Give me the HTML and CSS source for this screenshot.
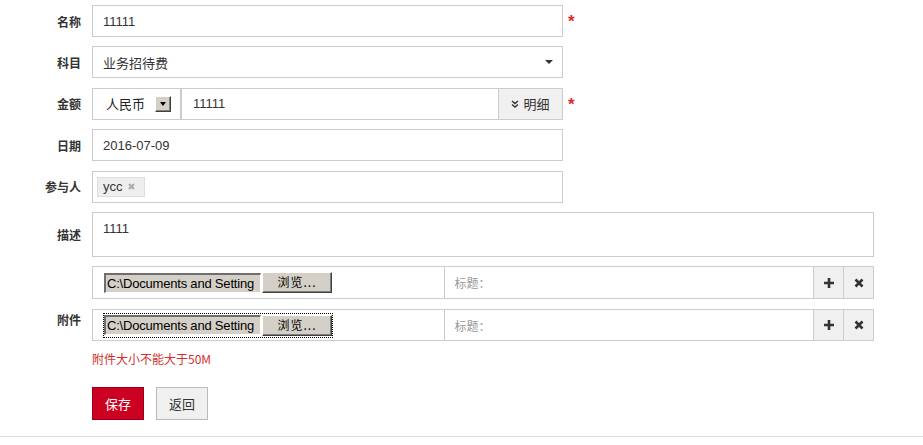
FILE: index.html
```html
<!DOCTYPE html>
<html>
<head>
<meta charset="utf-8">
<link rel="stylesheet" href="styles.css">
</head>
<body>
<div class="form">
  <div class="row">
    <div class="label">名称</div>
    <div class="box w470 txt">11111</div>
    <span class="req">*</span>
  </div>
  <div class="row">
    <div class="label">科目</div>
    <div class="box w470 txt cjk select">业务招待费<span class="caret"></span></div>
  </div>
  <div class="row">
    <div class="label">金额</div>
    <div class="group">
      <div class="cur"><span class="cur-text">人民币</span><span class="win-btn"><span class="win-tri"></span></span></div>
      <div class="amt txt">11111</div>
      <div class="detail"><svg class="dchev" width="8" height="8" viewBox="0 0 8 8"><path d="M1 1 L4 3.5 L7 1 M1 4.5 L4 7 L7 4.5" fill="none" stroke="#333" stroke-width="1.4"/></svg>明细</div>
    </div>
    <span class="req">*</span>
  </div>
  <div class="row">
    <div class="label">日期</div>
    <div class="box w470 txt">2016-07-09</div>
  </div>
  <div class="row">
    <div class="label">参与人</div>
    <div class="box w470 tags"><span class="tag">ycc <svg width="7" height="7" viewBox="0 0 7 7"><path d="M1 1 L6 6 M6 1 L1 6" stroke="#aaa" stroke-width="2"/></svg></span></div>
  </div>
  <div class="row">
    <div class="label">描述</div>
    <div class="box w782 area txt">1111</div>
  </div>
  <div class="row attach-row">
    <div class="label attach-label">附件</div>
    <div class="attach-group">
      <div class="file-row">
        <div class="file-cell"><div class="file-wrap"><span class="file-field">C:\Documents and Setting</span><span class="file-btn">浏览...</span></div></div>
        <div class="title-cell">标题：</div>
        <div class="icon-btn"><svg width="12" height="12" viewBox="0 0 12 12"><path d="M6 1 V11 M1 6 H11" stroke="#333" stroke-width="2.6"/></svg></div>
        <div class="icon-btn"><svg width="10" height="10" viewBox="0 0 10 10"><path d="M1.5 1.5 L8.5 8.5 M8.5 1.5 L1.5 8.5" stroke="#333" stroke-width="2.6"/></svg></div>
      </div>
      <div class="file-row second">
        <div class="file-cell"><div class="file-wrap focus"><span class="file-field">C:\Documents and Setting</span><span class="file-btn">浏览...</span></div></div>
        <div class="title-cell">标题：</div>
        <div class="icon-btn"><svg width="12" height="12" viewBox="0 0 12 12"><path d="M6 1 V11 M1 6 H11" stroke="#333" stroke-width="2.6"/></svg></div>
        <div class="icon-btn"><svg width="10" height="10" viewBox="0 0 10 10"><path d="M1.5 1.5 L8.5 8.5 M8.5 1.5 L1.5 8.5" stroke="#333" stroke-width="2.6"/></svg></div>
      </div>
      <div class="err">附件大小不能大于50M</div>
    </div>
  </div>
  <div class="actions">
    <span class="btn save">保存</span>
    <span class="btn back">返回</span>
  </div>
</div>
<div class="bottom-line"></div>
</body>
</html>
```

FILE: styles.css
```css
html, body {
  margin: 0;
  padding: 0;
  background: #fff;
}
body {
  font-family: "Liberation Sans", "Noto Sans CJK SC", sans-serif;
  font-size: 12px;
  color: #333;
}
.form {
  padding-top: 5px;
}
.row {
  display: flex;
  align-items: center;
  margin-bottom: 9.4px;
}
.label {
  width: 81px;
  padding-right: 11px;
  text-align: right;
  font-weight: bold;
  font-size: 12px;
  font-family: "Noto Sans CJK SC", sans-serif;
  color: #333;
  flex: none;
}
.box {
  box-sizing: border-box;
  height: 32px;
  border: 1px solid #ccc;
  background: #fff;
  display: flex;
  align-items: center;
  padding-left: 10px;
  position: relative;
}
.w470 { width: 471px; }
.w782 { width: 782px; }
.txt { font-size: 13px; color: #333; }
.cjk { font-family: "Noto Sans CJK SC", sans-serif; font-size: 13px; }
.req {
  color: #e02828;
  font-size: 17px;
  font-weight: bold;
  margin-left: 5px;
  margin-top: 2px;
  font-family: "Liberation Sans", sans-serif;
}
.caret {
  position: absolute;
  right: 9px;
  top: 13px;
  width: 0;
  height: 0;
  border-left: 4px solid transparent;
  border-right: 4px solid transparent;
  border-top: 4px solid #333;
}
.group {
  display: flex;
  height: 32px;
  width: 471px;
  box-sizing: border-box;
}
.cur {
  box-sizing: border-box;
  width: 90px;
  border: 1px solid #ccc;
  border-right: 2px solid #ccc;
  display: flex;
  align-items: center;
  padding-left: 13px;
  font-family: "Noto Sans CJK SC", sans-serif;
  font-size: 13px;
  color: #222;
}
.cur-text { width: 49px; }
.win-btn {
  box-sizing: border-box;
  width: 16px;
  height: 16px;
  background: #d4d0c8;
  border-top: 1px solid #fff;
  border-left: 1px solid #fff;
  border-right: 1px solid #404040;
  border-bottom: 1px solid #404040;
  box-shadow: inset -1px -1px 0 #808080;
  display: flex;
  align-items: center;
  justify-content: center;
}
.win-tri {
  width: 0;
  height: 0;
  border-left: 3.5px solid transparent;
  border-right: 3.5px solid transparent;
  border-top: 4px solid #000;
}
.amt {
  box-sizing: border-box;
  flex: 1;
  border-top: 1px solid #ccc;
  border-bottom: 1px solid #ccc;
  display: flex;
  align-items: center;
  padding-left: 11px;
}
.detail {
  box-sizing: border-box;
  width: 65px;
  background: #f0f0f0;
  border: 1px solid #ccc;
  display: flex;
  align-items: center;
  justify-content: center;
  font-family: "Noto Sans CJK SC", sans-serif;
  font-size: 13px;
  color: #333;
}
.dchev { margin-right: 4px; margin-top: 1px; }
.tags { padding-left: 4px; }
.tag {
  box-sizing: border-box;
  height: 20px;
  width: 48px;
  background: #eee;
  border: 1px solid #ddd;
  display: flex;
  align-items: center;
  padding-left: 5px;
  font-size: 13px;
  color: #333;
  gap: 5px;
}
.area {
  height: 45px;
  align-items: flex-start;
  padding-top: 8px;
}
.attach-row {
  align-items: flex-start;
  margin-top: 1.6px;
}
.attach-label {
  padding-top: 46px;
  line-height: 16px;
}
.attach-group {
  display: flex;
  flex-direction: column;
}
.file-row {
  box-sizing: border-box;
  width: 782px;
  height: 33px;
  display: flex;
  border: 1px solid #ccc;
}
.file-row.second {
  margin-top: 10px;
  height: 32px;
}
.file-cell {
  box-sizing: border-box;
  width: 352px;
  border-right: 1px solid #ccc;
  display: flex;
  align-items: center;
  padding-left: 10px;
}
.file-wrap {
  display: flex;
  align-items: center;
  border: 1px dotted transparent;
  padding: 1px 0 1px 0;
}
.file-wrap.focus {
  border: 1px dotted #000;
}
.file-field {
  box-sizing: border-box;
  width: 157px;
  height: 20px;
  overflow: hidden;
  white-space: nowrap;
  background: #d4d0c8;
  border-top: 2px solid #6e6e6e;
  border-left: 2px solid #6e6e6e;
  border-right: 1px solid #fff;
  border-bottom: 1px solid #fff;
  font-size: 13px;
  letter-spacing: -0.2px;
  line-height: 17px;
  color: #000;
  padding-left: 1px;
}
.file-btn {
  box-sizing: border-box;
  width: 70px;
  height: 21px;
  background: #d4d0c8;
  border-top: 1px solid #fff;
  border-left: 1px solid #fff;
  border-right: 1px solid #404040;
  border-bottom: 1px solid #404040;
  box-shadow: inset -1px -1px 0 #808080;
  font-family: "Noto Sans CJK SC", sans-serif;
  font-size: 12px;
  line-height: 18px;
  text-align: center;
  color: #000;
  letter-spacing: 1px;
  margin-left: 1px;
}
.title-cell {
  box-sizing: border-box;
  width: 369px;
  display: flex;
  align-items: center;
  padding-left: 10px;
  font-family: "Noto Sans CJK SC", sans-serif;
  font-size: 12px;
  color: #999;
}
.icon-btn {
  box-sizing: border-box;
  width: 30px;
  background: #f0f0f0;
  border-left: 1px solid #ccc;
  display: flex;
  align-items: center;
  justify-content: center;
}
.err {
  margin-top: 10px;
  line-height: 16px;
  font-family: "Noto Sans CJK SC", sans-serif;
  font-size: 12px;
  color: #d0312d;
}
.actions {
  display: flex;
  gap: 12px;
  padding-left: 92px;
  margin-top: 20px;
}
.btn {
  box-sizing: border-box;
  width: 52px;
  height: 33px;
  display: flex;
  align-items: center;
  justify-content: center;
  font-family: "Noto Sans CJK SC", sans-serif;
  font-size: 13px;
}
.save {
  background: #cc0020;
  border: 1px solid #99001a;
  color: #fff;
}
.back {
  background: #f0f0f0;
  border: 1px solid #bbb;
  color: #333;
}
.bottom-line {
  margin-top: 16px;
  height: 1px;
  background: #ddd;
}
```
